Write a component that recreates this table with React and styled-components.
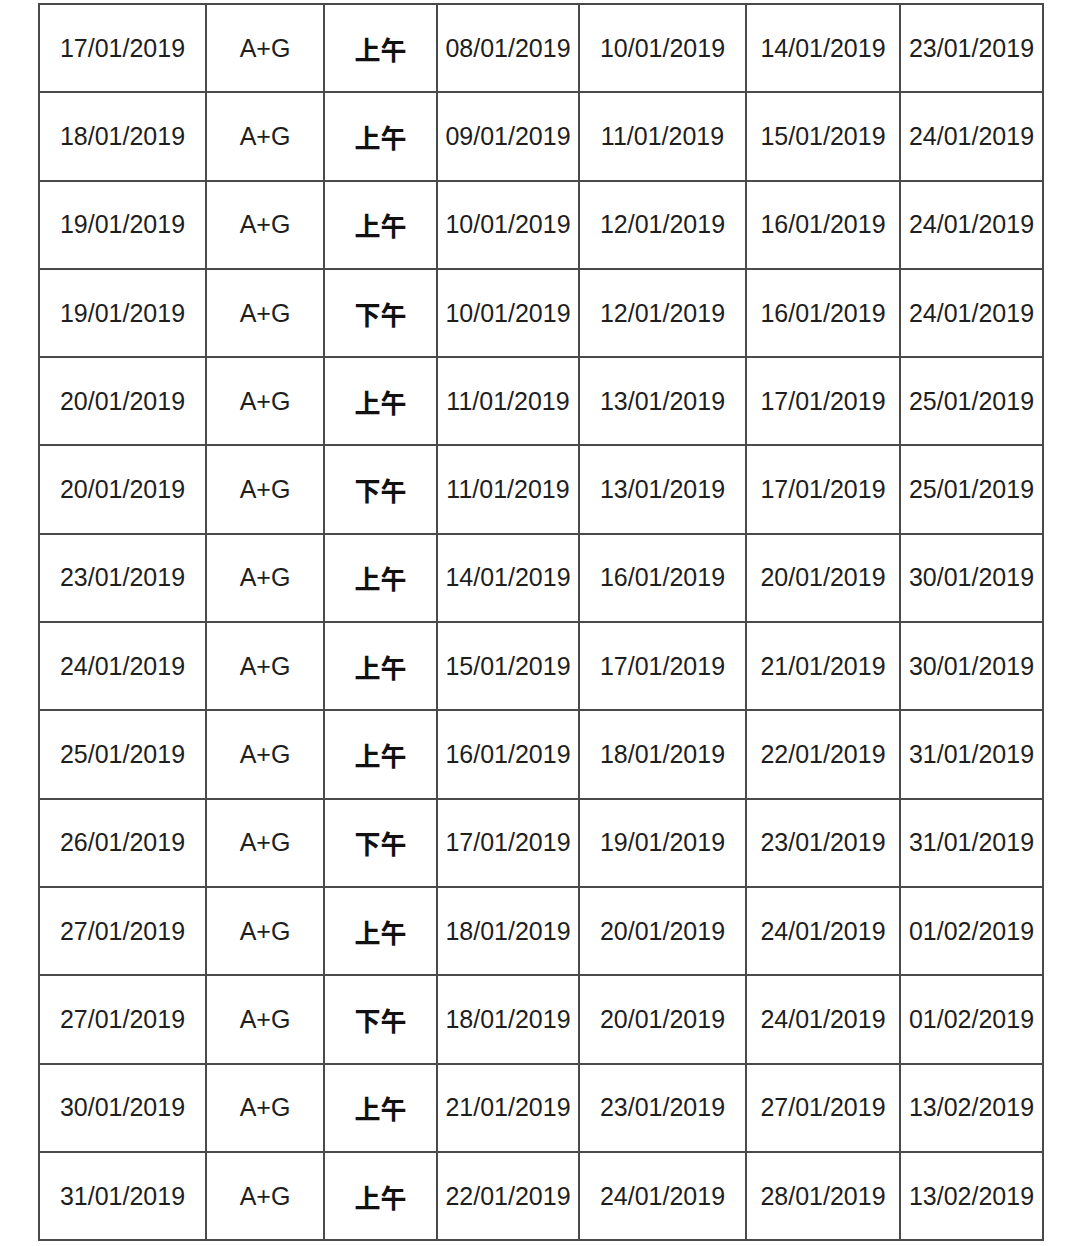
import React from 'react';
import styled, { createGlobalStyle } from 'styled-components';

const GlobalStyle = createGlobalStyle`
  html, body {
    margin: 0;
    padding: 0;
    background: #fff;
  }
  body {
    font-family: "Liberation Sans", Arial, sans-serif;
    color: #1e1e1e;
  }
`;

const Page = styled.div`
  padding: 3px 0 0 38px;
  width: 1080px;
  height: 1246px;
  box-sizing: border-box;
  overflow: hidden;
`;

const Table = styled.table`
  border-collapse: collapse;
  table-layout: fixed;
  width: 1004px;
`;

const Row = styled.tr`
  height: 88.3px;
`;

const Cell = styled.td`
  border: 2px solid #4a4a4a;
  padding: 0;
  text-align: center;
  vertical-align: middle;
  font-size: 25px;
  line-height: 1;
  white-space: nowrap;
  color: #1e1e1e;
`;

const PeriodCell = styled(Cell)`
  font-family: "Noto Sans CJK SC", "Liberation Sans", sans-serif;
  font-weight: 700;
  font-size: 26px;
  padding-top: 1px;
  color: #111;
`;

const widths = [167, 118, 113, 142, 167, 154, 143];

const rows = [
  ['17/01/2019', '上午', '08/01/2019', '10/01/2019', '14/01/2019', '23/01/2019'],
  ['18/01/2019', '上午', '09/01/2019', '11/01/2019', '15/01/2019', '24/01/2019'],
  ['19/01/2019', '上午', '10/01/2019', '12/01/2019', '16/01/2019', '24/01/2019'],
  ['19/01/2019', '下午', '10/01/2019', '12/01/2019', '16/01/2019', '24/01/2019'],
  ['20/01/2019', '上午', '11/01/2019', '13/01/2019', '17/01/2019', '25/01/2019'],
  ['20/01/2019', '下午', '11/01/2019', '13/01/2019', '17/01/2019', '25/01/2019'],
  ['23/01/2019', '上午', '14/01/2019', '16/01/2019', '20/01/2019', '30/01/2019'],
  ['24/01/2019', '上午', '15/01/2019', '17/01/2019', '21/01/2019', '30/01/2019'],
  ['25/01/2019', '上午', '16/01/2019', '18/01/2019', '22/01/2019', '31/01/2019'],
  ['26/01/2019', '下午', '17/01/2019', '19/01/2019', '23/01/2019', '31/01/2019'],
  ['27/01/2019', '上午', '18/01/2019', '20/01/2019', '24/01/2019', '01/02/2019'],
  ['27/01/2019', '下午', '18/01/2019', '20/01/2019', '24/01/2019', '01/02/2019'],
  ['30/01/2019', '上午', '21/01/2019', '23/01/2019', '27/01/2019', '13/02/2019'],
  ['31/01/2019', '上午', '22/01/2019', '24/01/2019', '28/01/2019', '13/02/2019'],
];

export default function App() {
  return (
    <Page>
      <GlobalStyle />
      <Table>
        <colgroup>
          {widths.map((w, i) => (
            <col key={i} style={{ width: w }} />
          ))}
        </colgroup>
        <tbody>
          {rows.map(([date, period, a, b, c, d], i) => (
            <Row key={i}>
              <Cell>{date}</Cell>
              <Cell>A+G</Cell>
              <PeriodCell>{period}</PeriodCell>
              <Cell>{a}</Cell>
              <Cell>{b}</Cell>
              <Cell>{c}</Cell>
              <Cell>{d}</Cell>
            </Row>
          ))}
        </tbody>
      </Table>
    </Page>
  );
}
